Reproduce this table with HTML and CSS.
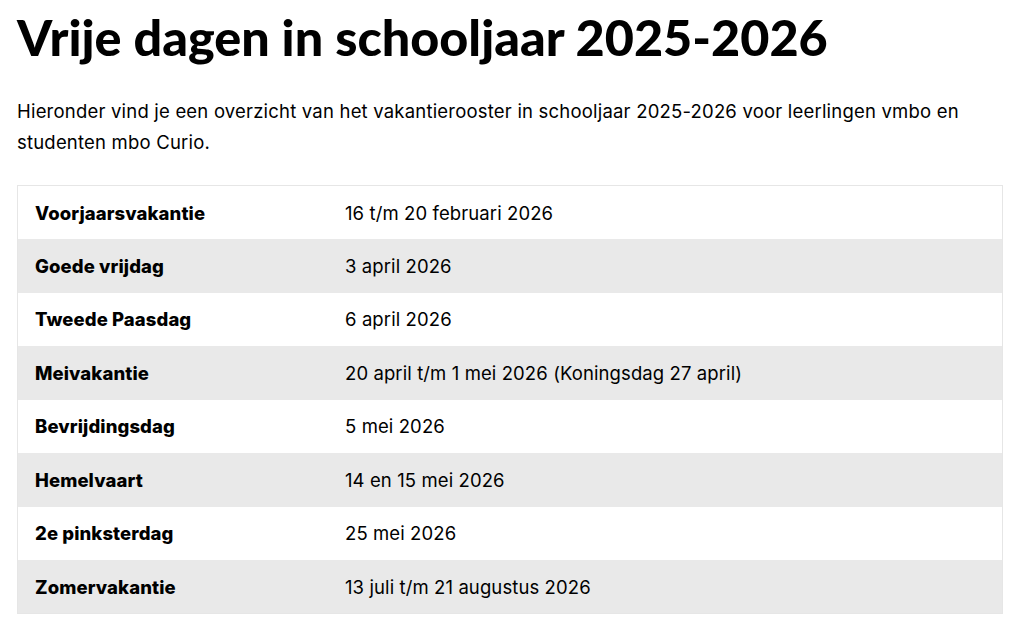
FILE: index.html
```html
<!DOCTYPE html>
<html lang="nl">
<head>
<meta charset="utf-8">
<title>Vrije dagen in schooljaar 2025-2026</title>
<link rel="stylesheet" href="styles.css">
</head>
<body>
<main class="page">
  <h1 class="title">Vrije dagen in schooljaar 2025-2026</h1>
  <p class="intro">Hieronder vind je een overzicht van het vakantierooster in schooljaar 2025-2026 voor leerlingen vmbo en studenten mbo Curio.</p>
  <table class="days">
    <tbody>
      <tr><th>Voorjaarsvakantie</th><td>16 t/m 20 februari 2026</td></tr>
      <tr><th>Goede vrijdag</th><td>3 april 2026</td></tr>
      <tr><th>Tweede Paasdag</th><td>6 april 2026</td></tr>
      <tr><th>Meivakantie</th><td>20 april t/m 1 mei 2026 (Koningsdag 27 april)</td></tr>
      <tr><th>Bevrijdingsdag</th><td>5 mei 2026</td></tr>
      <tr><th>Hemelvaart</th><td>14 en 15 mei 2026</td></tr>
      <tr><th>2e pinksterdag</th><td>25 mei 2026</td></tr>
      <tr><th>Zomervakantie</th><td>13 juli t/m 21 augustus 2026</td></tr>
    </tbody>
  </table>
</main>
</body>
</html>
```
FILE: styles.css
```css
html, body {
  margin: 0;
  padding: 0;
  background: #ffffff;
}
body {
  font-family: "Inter", "Noto Sans", sans-serif;
  color: #000000;
}
.page {
  padding: 0 12px 0 17px;
}
.title {
  margin: 0;
  padding-top: 4px;
  font-family: "Lato", "Inter", sans-serif;
  font-size: 50.3px;
  font-weight: 900;
  line-height: 66px;
}
.intro {
  margin: 26px 0 0 0;
  font-size: 18.5px;
  line-height: 31px;
  letter-spacing: 0.2px;
}
.days {
  margin-top: 27px;
  width: 986px;
  border-collapse: collapse;
  border: 1px solid #e6e6e6;
}
.days tr {
  height: 53.5px;
}
.days tr:nth-child(even) {
  background: #e9e9e9;
}
.days th,
.days td {
  padding: 0 17px;
  font-size: 18.5px;
  letter-spacing: 0.1px;
  text-align: left;
  vertical-align: middle;
}
.days th {
  width: 276px;
  font-weight: 800;
}
.days td {
  font-weight: 400;
}
```
